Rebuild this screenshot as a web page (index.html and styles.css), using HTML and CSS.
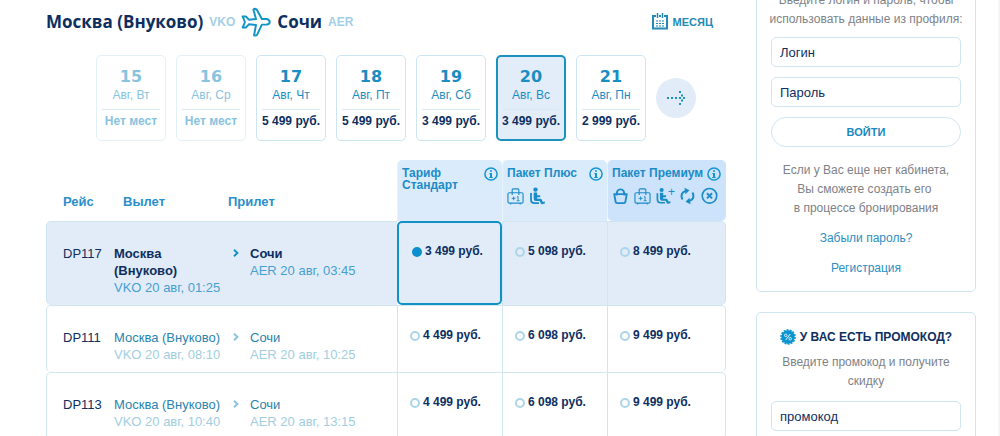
FILE: index.html
```html
<!DOCTYPE html>
<html lang="ru">
<head>
<meta charset="utf-8">
<title>Москва (Внуково) — Сочи</title>
<link rel="stylesheet" href="styles.css">
</head>
<body>
<svg class="defs" aria-hidden="true">
  <defs>
    <symbol id="info" viewBox="0 0 14 14"><circle cx="7" cy="7" r="6.1" fill="none" stroke="currentColor" stroke-width="1.5"/><path d="M6 3.2h2v1.6H6zM5.4 6H8v4h.8v1H5.2v-1H6V7h-.6z" fill="currentColor"/></symbol>
    <symbol id="luggage" viewBox="0 0 18 20"><path d="M2.500 6.500h13a1.500 1.500 0 0 1 1.500 1.500v8a1.500 1.500 0 0 1-1.500 1.500h-13A1.500 1.500 0 0 1 1 16V8a1.500 1.500 0 0 1 1.500-1.500zM5.500 9V3.500a1 1 0 0 1 1-1h5a1 1 0 0 1 1 1V9M4 17.500V19M14 17.500V19" fill="none" stroke="currentColor" stroke-width="1.200"/><path d="M5 12.500h4M7 10.500v4M10.500 11.300l1.200-.8v4.500M10.300 15h3" fill="none" stroke="currentColor"/></symbol>
    <symbol id="seat" viewBox="0 0 16 20"><circle cx="6" cy="3.600" r="2.200" fill="currentColor"/><path d="M1.500 7v6.500q0 3.700 3.500 3.700h4.500" fill="none" stroke="currentColor" stroke-width="1.800"/><path d="M4.200 6.600h3.500v2.700h3v2h-3v1.500h3.200q1 0 1.400.9l1 2.200 2-.3v2l-2.700.6q-.8.100-1.200-.8l-1.200-2.400H6.300q-2.100 0-2.100-2z" fill="currentColor"/></symbol>
    <symbol id="bag" viewBox="0 0 18 20"><path d="M1.500 8h15M2.400 8l1.400 8q.2 1.500 1.700 1.500h7q1.500 0 1.700-1.500l1.400-8M5 9.500Q4.500 3 9 3t4 6.500" fill="none" stroke="currentColor" stroke-width="2" stroke-linejoin="round"/></symbol>
    <symbol id="refresh" viewBox="0 0 16 20"><path d="M3 13.500Q0 7.500 6 4.800M13 6.500q3 6-3 8.700" fill="none" stroke="currentColor" stroke-width="2"/><path d="M5 1.800l5 2.400-4 4zM11 18.200l-5-2.400 4-4z" fill="currentColor"/></symbol>
    <symbol id="cancel" viewBox="0 0 18 20"><circle cx="9" cy="9.800" r="7.700" fill="none" stroke="currentColor" stroke-width="1.700"/><path d="M6.300 7.100l5.400 5.400M11.700 7.100l-5.400 5.400" stroke="currentColor" stroke-width="2"/></symbol>
    <symbol id="chevron" viewBox="0 0 6 8"><path d="M1 .8L4.400 4 1 7.200" fill="none" stroke="currentColor" stroke-width="2"/></symbol>
  </defs>
</svg>
<div class="page">
  <main class="main">
    <header class="route">
      <h1 class="route-title">
        <span>Москва (Внуково)</span> <span class="code">VKO</span>
        <svg class="plane" viewBox="0 0 92 92" aria-hidden="true"><path d="M64 37H78Q88 39 88 46T78 54H64L50 84Q47 89 40 87L46 55L24 53L15 63H5L12 46L5 29H15L24 39L46 37L38 8Q43 3 49 9Z" fill="#fff" stroke="currentColor" stroke-width="6" stroke-linejoin="round"/></svg>
        <span>Сочи</span> <span class="code">AER</span>
      </h1>
      <a class="month" href="#month">
        <svg class="month-icon" viewBox="0 0 16 17" aria-hidden="true"><path d="M4 3H1v12.500h14V3h-3M7 3h2" fill="none" stroke="currentColor" stroke-width="2"/><path d="M5.500 0v5M10.500 0v5" stroke="currentColor" stroke-width="1.500"/><path d="M4 8h2m1 0h2m1 0h2M4 10.500h2m1 0h2m1 0h2M4 13h2m1 0h2m1 0h2" stroke="currentColor" stroke-width="1.200"/></svg>
        МЕСЯЦ
      </a>
    </header>

    <nav class="dates" aria-label="Даты">
      <button class="date sold-out" type="button" disabled><span class="day">15</span><span class="weekday">Авг, Вт</span><span class="cost">Нет мест</span></button>
      <button class="date sold-out" type="button" disabled><span class="day">16</span><span class="weekday">Авг, Ср</span><span class="cost">Нет мест</span></button>
      <button class="date" type="button"><span class="day">17</span><span class="weekday">Авг, Чт</span><span class="cost">5 499 руб.</span></button>
      <button class="date" type="button"><span class="day">18</span><span class="weekday">Авг, Пт</span><span class="cost">5 499 руб.</span></button>
      <button class="date" type="button"><span class="day">19</span><span class="weekday">Авг, Сб</span><span class="cost">3 499 руб.</span></button>
      <button class="date current" type="button" aria-pressed="true"><span class="day">20</span><span class="weekday">Авг, Вс</span><span class="cost">3 499 руб.</span></button>
      <button class="date" type="button"><span class="day">21</span><span class="weekday">Авг, Пн</span><span class="cost">2 999 руб.</span></button>
      <button class="next" type="button" aria-label="Следующие даты">
        <svg class="next-icon" viewBox="0 0 20 16" aria-hidden="true"><path d="M1 7h2v2H1zM5 7h2v2H5zM9 7h2v2H9zM13 7h2v2h-2zM17 7h2v2h-2zM15 4.500h2v2h-2zM13 1h2v2h-2zM15 9.500h2v2h-2zM13 13h2v2h-2z" fill="currentColor"/></svg>
      </button>
    </nav>

    <table class="flights">
      <colgroup><col class="col-flight"><col class="col-from"><col class="col-to"><col class="col-fare"><col class="col-fare"><col class="col-premium"></colgroup>
      <thead>
        <tr>
          <th class="head" scope="col">Рейс</th>
          <th class="head head-from" scope="col">Вылет</th>
          <th class="head head-to" scope="col">Прилет</th>
          <th class="fare" scope="col"><div class="fare-name"><span>Тариф Стандарт</span><svg class="info"><use href="#info"/></svg></div></th>
          <th class="fare" scope="col"><div class="fare-name"><span>Пакет Плюс</span><svg class="info"><use href="#info"/></svg></div>
            <div class="perks"><svg class="perk"><use href="#luggage"/></svg><svg class="perk"><use href="#seat"/></svg></div></th>
          <th class="fare premium" scope="col"><div class="fare-name"><span>Пакет Премиум</span><svg class="info"><use href="#info"/></svg></div>
            <div class="perks"><svg class="perk"><use href="#bag"/></svg><svg class="perk"><use href="#luggage"/></svg><span class="seat-plus"><svg class="perk"><use href="#seat"/></svg><span class="plus">+</span></span><svg class="perk"><use href="#refresh"/></svg><svg class="perk"><use href="#cancel"/></svg></div></th>
        </tr>
      </thead>
      <tbody>
        <tr class="chosen">
          <td class="flight">DP117</td>
          <td class="from"><div class="city">Москва (Внуково)</div><div class="time">VKO 20 авг, 01:25</div></td>
          <td class="to"><div class="arrival"><svg class="chevron"><use href="#chevron"/></svg><div><div class="city">Сочи</div><div class="time">AER 20 авг, 03:45</div></div></div></td>
          <td class="price picked"><label class="option"><input class="radio" type="radio" name="fare" checked>3 499 руб.</label></td>
          <td class="price"><label class="option"><input class="radio" type="radio" name="fare">5 098 руб.</label></td>
          <td class="price"><label class="option"><input class="radio" type="radio" name="fare">8 499 руб.</label></td>
        </tr>
        <tr>
          <td class="flight">DP111</td>
          <td class="from"><div class="city">Москва (Внуково)</div><div class="time">VKO 20 авг, 08:10</div></td>
          <td class="to"><div class="arrival"><svg class="chevron"><use href="#chevron"/></svg><div><div class="city">Сочи</div><div class="time">AER 20 авг, 10:25</div></div></div></td>
          <td class="price"><label class="option"><input class="radio" type="radio" name="fare">4 499 руб.</label></td>
          <td class="price"><label class="option"><input class="radio" type="radio" name="fare">6 098 руб.</label></td>
          <td class="price"><label class="option"><input class="radio" type="radio" name="fare">9 499 руб.</label></td>
        </tr>
        <tr>
          <td class="flight">DP113</td>
          <td class="from"><div class="city">Москва (Внуково)</div><div class="time">VKO 20 авг, 10:40</div></td>
          <td class="to"><div class="arrival"><svg class="chevron"><use href="#chevron"/></svg><div><div class="city">Сочи</div><div class="time">AER 20 авг, 13:15</div></div></div></td>
          <td class="price"><label class="option"><input class="radio" type="radio" name="fare">4 499 руб.</label></td>
          <td class="price"><label class="option"><input class="radio" type="radio" name="fare">6 098 руб.</label></td>
          <td class="price"><label class="option"><input class="radio" type="radio" name="fare">9 499 руб.</label></td>
        </tr>
      </tbody>
    </table>
  </main>

  <aside class="sidebar">
    <form class="card login">
      <p class="note intro">Введите логин и пароль, чтобы<br>использовать данные из профиля:</p>
      <input class="field" type="text" placeholder="Логин" aria-label="Логин">
      <input class="field" type="password" placeholder="Пароль" aria-label="Пароль">
      <button class="submit" type="submit">ВОЙТИ</button>
      <p class="note">Если у Вас еще нет кабинета,<br>Вы сможете создать его&nbsp;<br>в процессе бронирования</p>
      <a class="link" href="#forgot">Забыли пароль?</a>
      <a class="link" href="#register">Регистрация</a>
    </form>
    <form class="card promo">
      <h2 class="promo-title">
        <svg class="badge" viewBox="0 0 16 16" aria-hidden="true"><circle cx="8" cy="8" r="6.700" fill="#0a94d2"/><circle cx="8" cy="8" r="7" fill="none" stroke="#0a94d2" stroke-width="1.600" stroke-dasharray="1.900 1.240"/><path d="M10.300 5l-4.600 6" stroke="#fff" stroke-width=".9"/><circle cx="5.800" cy="6.300" r="1.300" fill="none" stroke="#fff" stroke-width=".8"/><circle cx="10.200" cy="9.700" r="1.300" fill="none" stroke="#fff" stroke-width=".8"/></svg>
        У ВАС ЕСТЬ ПРОМОКОД?
      </h2>
      <p class="note">Введите промокод и получите<br>скидку</p>
      <input class="field" type="text" placeholder="промокод" aria-label="Промокод">
    </form>
  </aside>
</div>
</body>
</html>
```
FILE: styles.css
```css
* { box-sizing: border-box; }

body {
  margin: 0;
  background: #fff;
  color: #0d2f5f;
  font: 13px/17px "Liberation Sans", Arial, sans-serif;
}

button, input { font: inherit; color: inherit; }

.defs { position: absolute; width: 0; height: 0; }

.page {
  display: grid;
  grid-template-columns: minmax(0, 1fr) 220px;
  gap: 30px;
  height: 100vh;
  overflow: hidden;
  padding: 0 22px 0 46px;
  border-right: 2px solid #f4f5f5;
}

/* Route heading */
.route {
  display: flex;
  justify-content: space-between;
  align-items: center;
  height: 43px;
  padding-right: 15px;
}

.route-title {
  display: flex;
  align-items: center;
  gap: 6px;
  margin: 0;
  font: 700 17px/24px "Open Sans", "Noto Sans", sans-serif;
}

.code { color: #a5cfe6; font: bold 12px/24px "Liberation Sans", Arial, sans-serif; }
.plane { width: 30px; height: 30px; color: #1295c6; }

.month {
  display: flex;
  align-items: center;
  gap: 5px;
  margin-right: -2px;
  color: #2389b5;
  font-size: 11px;
  font-weight: bold;
  line-height: 20px;
  text-decoration: none;
}

.month-icon { width: 16px; height: 17px; }

/* Date picker */
.dates {
  display: flex;
  align-items: center;
  gap: 10px;
  padding: 12px 0 19px 50px;
}

.date {
  display: flex;
  flex-direction: column;
  width: 70px;
  height: 86px;
  padding: 11px 5px;
  border: 1px solid #cbe5f2;
  border-radius: 5px;
  background: #fff;
  color: #1a8dc2;
  font-size: 12px;
  text-align: center;
}

.day { font: bold 16px/20px "DejaVu Sans", sans-serif; }
.weekday { line-height: 16px; padding-bottom: 6px; border-bottom: 1px solid #d9e9f3; }
.cost { padding-top: 3px; color: #0d2f5f; font-weight: bold; line-height: 16px; white-space: nowrap; }
.date .cost { margin: 0 -2px; }
.sold-out { border-color: #e2f1f8; color: #88c3e0; }
.sold-out .cost { color: #88c3e0; }
.current { padding: 10px 5px; border: 2px solid #1b91be; background: #e3edfa; }

.next {
  display: grid;
  place-items: center;
  width: 40px;
  height: 40px;
  padding: 0;
  border: 0;
  border-radius: 50%;
  background: #e2ecf9;
  color: #1b91be;
}

.next-icon { width: 20px; height: 16px; }

/* Flights */
.flights {
  width: 100%;
  table-layout: fixed;
  border-collapse: separate;
  border-spacing: 0;
}

.col-flight { width: 60px; }
.col-from { width: 122px; }
.col-fare { width: 105px; }
.col-premium { width: 119px; }

th, td { padding: 0; text-align: left; vertical-align: top; }

.head { height: 61px; padding: 33px 0 0 17px; color: #2b8fcb; }
.head-to { padding-left: 0; }

.fare {
  padding: 7px 4px 0;
  border-left: 1px solid #e8f4fd;
  border-radius: 5px 5px 0 0;
  background: linear-gradient(#d9ecfb, #dceafa);
  color: #1b8cc8;
  font-size: 12px;
  line-height: 12px;
}

.premium { padding-right: 5px; border-radius: 5px; background: #cce3fb; }
.fare-name { display: flex; justify-content: space-between; height: 19px; }
.info { flex: none; width: 14px; height: 14px; color: #1595d0; }
.perks { display: flex; gap: 5px; }
.perk { width: 17px; height: 20px; }
.seat-plus { display: flex; width: 18px; }
.seat-plus .perk { flex: none; width: 15px; }
.plus { margin-left: -3px; font-weight: normal; line-height: 12px; }

td { border-top: 1px solid #d2e6f0; padding-top: 23px; padding-bottom: 9px; }
.flight { padding-left: 16px; border-left: 1px solid #cfe5f1; border-radius: 5px 0 0 5px; }
.from { padding-left: 8px; }
.city { color: #2b84ad; }
.time { color: #a1cee0; white-space: nowrap; }
.arrival { display: flex; gap: 11px; padding-left: 5px; }
.chevron { width: 6px; height: 8px; margin-top: 4px; color: #8cc5de; }

.price {
  padding: 21px 0 0 12px;
  border-left: 1px solid #cfe5f1;
  font-size: 12px;
  font-weight: bold;
}

.price:last-child { border-right: 1px solid #cfe5f1; border-radius: 0 5px 5px 0; }
.option { display: flex; align-items: center; gap: 3px; white-space: nowrap; }

.radio {
  appearance: none;
  width: 10px;
  height: 10px;
  margin: 1px 0 0;
  border: 2px solid #acd5e8;
  border-radius: 50%;
}

.radio:checked { border-color: #0a90cc; background: #0a90cc; }

.chosen td { background: #e2ecf9; }
.chosen .city { color: #0d2f5f; font-weight: bold; }
.chosen .time { color: #479fcf; }
.chosen .chevron { color: #1b91be; }
.chosen .picked { padding: 20px 0 0 13px; border: 2px solid #1292c4; border-radius: 5px; }

/* Sidebar */
.card {
  display: flex;
  flex-direction: column;
  gap: 10px;
  padding: 14px;
  border: 1px solid #cfe5ef;
  border-radius: 5px;
  text-align: center;
}

.login { margin: -26px 0 20px; padding: 16px 14px 13px; }
.note { margin: 0 -10px; color: #7d8287; font-size: 12px; line-height: 19px; }
.intro { margin-bottom: -2px; }
.submit + .note { margin-top: 4px; }

.field {
  width: 100%;
  height: 30px;
  padding: 0 8px;
  border: 1px solid #cfe5f0;
  border-radius: 5px;
  background: #fff;
}

.field::placeholder { color: #0d2f5f; opacity: 1; }

.submit {
  height: 30px;
  border: 1px solid #cfe5f0;
  border-radius: 15px;
  background: #fff;
  color: #1b87bd;
  font-size: 11px;
  font-weight: bold;
}

.link { color: #2b8fc5; font-size: 12px; line-height: 20px; text-decoration: none; }

.promo-title {
  display: flex;
  justify-content: center;
  align-items: center;
  gap: 4px;
  margin: 0 -10px -4px;
  font-size: 12px;
  line-height: 20px;
  white-space: nowrap;
}

.badge { width: 16px; height: 16px; }
```
